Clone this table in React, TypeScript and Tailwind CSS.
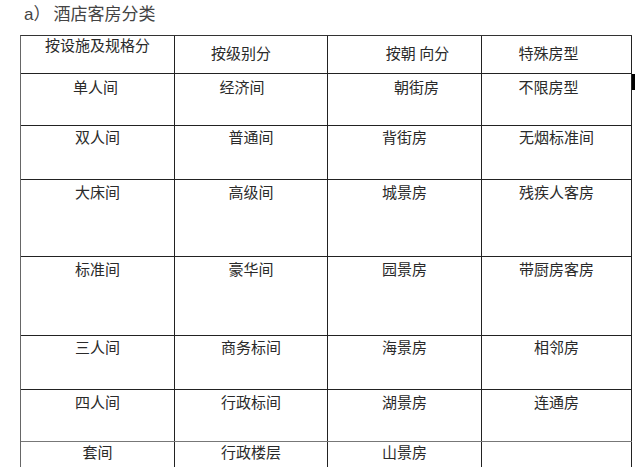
import React from "react";

type Cell = { t: string; c?: string };
type Row = { h: string; pt: string; cells: Cell[] };

const rows: Row[] = [
  {
    h: "h-[38px]",
    pt: "",
    cells: [
      { t: "按设施及规格分", c: "pt-[0px]" },
      { t: "按级别分", c: "pt-[8px] pr-[20px]" },
      { t: "按朝 向分", c: "pt-[8px] pl-[26px]" },
      { t: "特殊房型", c: "pt-[8px] pr-[16px]" },
    ],
  },
  {
    h: "h-[52px]",
    pt: "pt-[4px]",
    cells: [
      { t: "单人间", c: "pr-[4px]" },
      { t: "经济间", c: "pr-[18px]" },
      { t: "朝街房", c: "pl-[24px]" },
      { t: "不限房型", c: "pr-[16px]" },
    ],
  },
  {
    h: "h-[54px]",
    pt: "pt-[2px]",
    cells: [{ t: "双人间" }, { t: "普通间" }, { t: "背街房" }, { t: "无烟标准间" }],
  },
  {
    h: "h-[77px]",
    pt: "pt-[3px]",
    cells: [{ t: "大床间" }, { t: "高级间" }, { t: "城景房" }, { t: "残疾人客房" }],
  },
  {
    h: "h-[79px]",
    pt: "pt-[3px]",
    cells: [{ t: "标准间" }, { t: "豪华间" }, { t: "园景房" }, { t: "带厨房客房" }],
  },
  {
    h: "h-[54px]",
    pt: "pt-[2px]",
    cells: [{ t: "三人间" }, { t: "商务标间" }, { t: "海景房" }, { t: "相邻房" }],
  },
  {
    h: "h-[52px]",
    pt: "pt-[3px]",
    cells: [{ t: "四人间" }, { t: "行政标间" }, { t: "湖景房" }, { t: "连通房" }],
  },
  {
    h: "h-[52px]",
    pt: "pt-[1px]",
    cells: [{ t: "套间" }, { t: "行政楼层" }, { t: "山景房" }, { t: "" }],
  },
];

const colW = ["w-[154px]", "w-[153px]", "w-[154px]", "w-[150px]"];

export default function App() {
  return (
    <div
      className="relative w-[640px] h-[467px] overflow-hidden bg-white text-[#2a2a2a]"
      style={{ fontFamily: '"Noto Sans CJK SC", "Liberation Sans", sans-serif' }}
    >
      <div className="h-[35px] pl-[24px] pt-[2px] text-[17px] leading-[22px] text-[#444]">
        <span style={{ fontFamily: '"Liberation Sans", "Noto Sans CJK SC", sans-serif' }}>a</span>
        <span>）</span>
        <span className="ml-[3px]">酒店客房分类</span>
      </div>
      <div className="ml-[20px] w-[612px] border-l border-t border-l-[#666] border-t-[#333]">
        {rows.map((r, i) => (
          <div key={i} className={`flex ${r.h} border-b ${i === 6 ? "border-b-[#777]" : "border-b-[#222]"}`}>
            {r.cells.map((c, j) => (
              <div
                key={j}
                className={`${colW[j]} shrink-0 border-r border-r-[#222] text-center text-[15px] leading-[18px] ${r.pt} ${c.c ?? ""}`}
              >
                {c.t}
              </div>
            ))}
          </div>
        ))}
      </div>
      <div className="absolute left-[632px] top-[74px] w-[3px] h-[16px] bg-black" />
    </div>
  );
}
